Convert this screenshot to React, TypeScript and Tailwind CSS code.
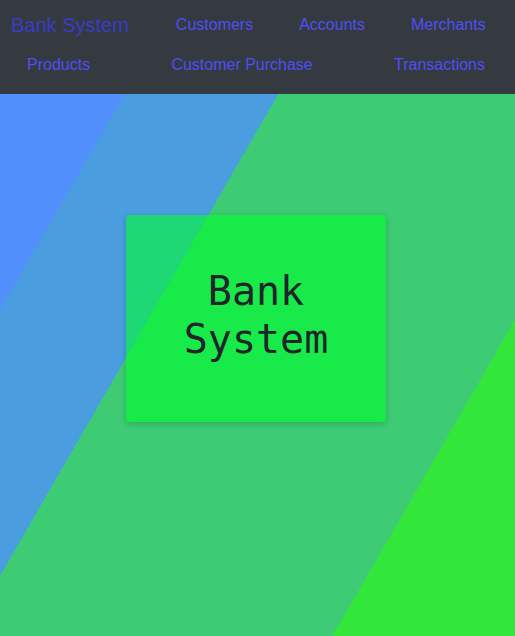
const navLinkClass = "text-[16px] leading-6 text-[#4f4ff5] hover:underline";

export default function App() {
  const topLinks = ["Customers", "Accounts", "Merchants"];
  const bottomLinks = ["Products", "Customer Purchase", "Transactions"];

  return (
    <div className="w-full min-h-screen flex flex-col font-['Liberation_Sans',Arial,sans-serif]">
      {/* Navbar */}
      <nav className="bg-[#343a40] pb-[17px]">
        <div className="h-[50px] flex items-center pl-[11px]">
          <a href="#" className="text-[20px] leading-[30px] text-[#3b3bc8]">
            Bank System
          </a>
          <div className="flex items-center ml-[47px] gap-[46px]">
            {topLinks.map((l) => (
              <a key={l} href="#" className={navLinkClass}>
                {l}
              </a>
            ))}
          </div>
        </div>
        <div className="h-[27px] flex items-end justify-between pl-[27px] pr-[30px]">
          {bottomLinks.map((l) => (
            <a key={l} href="#" className={navLinkClass}>
              {l}
            </a>
          ))}
        </div>
      </nav>

      {/* Striped background */}
      <main className="flex-1 bg-[linear-gradient(120deg,#508ffc_108px,#4a9ddf_108px,#4a9ddf_241px,#3dcb74_241px,#3dcb74_559px,#33e63a_559px)]">
        <div className="ml-[126px] mt-[121px] w-[260px] h-[207px] rounded-[4px] bg-[rgba(0,255,45,0.6)] shadow-[0_2px_6px_rgba(0,0,0,0.18)] flex items-center justify-center pb-[8px]">
          <h1 className="text-center text-[40px] leading-[48px] text-[#212529] font-['DejaVu_Sans_Mono',monospace]">
            Bank
            <br />
            System
          </h1>
        </div>
      </main>
    </div>
  );
}
